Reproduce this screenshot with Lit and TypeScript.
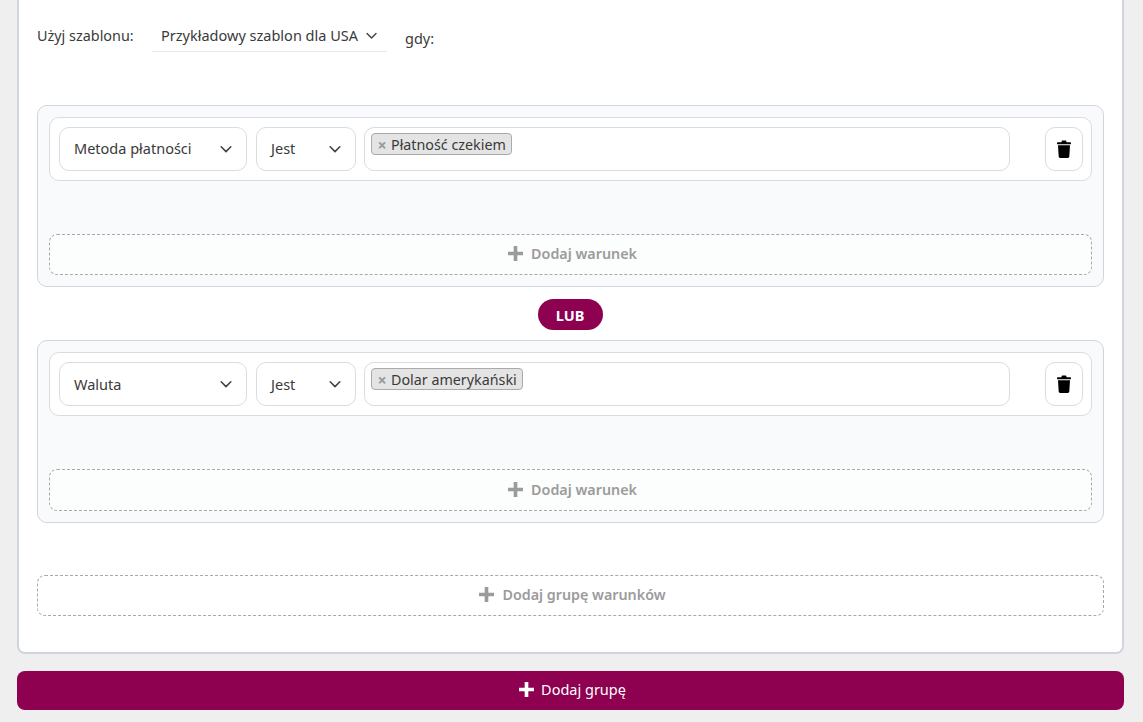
import { LitElement, html, css } from "lit";
import { customElement } from "lit/decorators.js";

const chevron = (cls = "chev") => html`<svg class=${cls} viewBox="0 0 16 16" fill="none" stroke="#444" stroke-width="1.8" stroke-linecap="round" stroke-linejoin="round"><path d="M2.5 5.500 8 11l5.500-5.500"/></svg>`;
const plus = html`<svg class="plus" viewBox="0 0 14 14" fill="currentColor"><path d="M5.300 0h3.400v5.300H14v3.400H8.700V14H5.300V8.700H0V5.300h5.300z"/></svg>`;
const trash = html`<svg class="trash" viewBox="0 0 14 18" fill="#000"><path d="M5 .6h4l.7 1.700H13.200a.8.8 0 0 1 .8.8v.6a.6.6 0 0 1-.6.6H.6a.6.6 0 0 1-.6-.6v-.6a.8.8 0 0 1 .8-.8h3.500z"/><path d="M1 5.200h12l-.7 11.300c0 .8-.7 1.400-1.500 1.400H3.200c-.8 0-1.500-.6-1.500-1.400z"/></svg>`;

@customElement("app-root")
export class AppRoot extends LitElement {
  static styles = css`
    :host { display: block; height: 722px; overflow: hidden; background: #efefef; font-family: "Noto Sans", "Open Sans", sans-serif; font-size: 14.500px; color: #3a3a3a; }
    .page { padding: 0 19px 0 17px; display: flex; flex-direction: column; gap: 17px; }
    .card { background: #fff; border: 2px solid #d0d5dd; border-top: 0; border-radius: 0 0 8px 8px; padding: 24.600px 18px 36px; }
    .top { display: flex; height: 27px; margin-bottom: 53px; }
    .lbl { width: 115px; padding-top: 1px; line-height: 20px; font-size: 14.400px; }
    .tpl { width: 235px; box-sizing: border-box; height: 27px; border-bottom: 1px solid #e8e8e8; padding: 0 9px 5px; display: flex; align-items: center; justify-content: space-between; line-height: 20px; }
    .tpl .chev { width: 13px; height: 13px; }
    .gdy { margin-left: 18px; padding-top: 3px; line-height: 20px; }
    .group { box-sizing: border-box; height: 182.500px; background: #f9fafb; border: 1px solid #d0d5dd; border-radius: 10px; padding: 11px; }
    .rule { background: #fff; border: 1px solid #d9dce1; border-radius: 10px; padding: 9px 8px 9px 9px; display: flex; margin-bottom: 53px; }
    .sel { box-sizing: border-box; height: 44px; background: #fff; border: 1px solid #d9dce1; border-radius: 10px; display: flex; align-items: center; justify-content: space-between; padding: 0 13px 0 14px; }
    .sel span { padding-bottom: 1.200px; }
    .sel .chev { width: 14px; height: 14px; }
    .field { width: 188px; margin-right: 9px; }
    .op { width: 100px; margin-right: 8px; }
    .tags { box-sizing: border-box; width: 646px; height: 44px; background: #fff; border: 1px solid #d9dce1; border-radius: 10px; padding: 5px 6px; margin-right: 35px; }
    .tag { display: inline-flex; align-items: center; box-sizing: border-box; height: 22px; background: #e4e4e4; border: 1px solid #aaa; border-radius: 4px; padding: 2px 5px 0; gap: 4px; line-height: 20px; font-size: 14.300px; }
    .tag b { width: 10px; text-align: center; font-weight: 700; color: #999; font-size: 16px; }
    .del { box-sizing: border-box; width: 38px; height: 44px; background: #fff; border: 1px solid #d9dce1; border-radius: 10px; display: flex; align-items: center; justify-content: center; }
    .trash { width: 14px; height: 18px; }
    .add { box-sizing: border-box; height: 41.500px; background: #fcfdfd; border: 1px dashed #a8a8a8; border-radius: 8px; display: flex; align-items: center; justify-content: center; gap: 8px; color: #9b9b9b; font-weight: 600; font-size: 14.300px; padding: 0 0 1.200px 4px; }
    .add.big { background: #fff; margin-top: 52px; }
    .plus { width: 15px; height: 15px; }
    .lub-row { display: flex; justify-content: center; padding: 12px 0 10px; margin-right: 1px; }
    .lub { width: 65px; height: 31px; box-sizing: border-box; border-radius: 16px; background: #8e0050; color: #fff; font-weight: 700; display: flex; align-items: center; justify-content: center; }
    .submit { box-sizing: border-box; height: 39px; background: #8e0050; color: #fff; border-radius: 8px; display: flex; align-items: center; justify-content: center; gap: 7px; padding: 0 0 3px 4px; }
  `;

  private group(field: string, tag: string) {
    return html`<div class="group">
      <div class="rule">
        <div class="sel field"><span>${field}</span>${chevron()}</div>
        <div class="sel op"><span>Jest</span>${chevron()}</div>
        <div class="tags"><span class="tag"><b>×</b>${tag}</span></div>
        <div class="del">${trash}</div>
      </div>
      <div class="add">${plus}<span>Dodaj warunek</span></div>
    </div>`;
  }

  render() {
    return html`<div class="page">
      <section class="card">
        <div class="top">
          <span class="lbl">Użyj szablonu:</span>
          <div class="tpl"><span>Przykładowy szablon dla USA</span>${chevron()}</div>
          <span class="gdy">gdy:</span>
        </div>
        ${this.group("Metoda płatności", "Płatność czekiem")}
        <div class="lub-row"><div class="lub">LUB</div></div>
        ${this.group("Waluta", "Dolar amerykański")}
        <div class="add big">${plus}<span>Dodaj grupę warunków</span></div>
      </section>
      <div class="submit">${plus}<span>Dodaj grupę</span></div>
    </div>`;
  }
}
